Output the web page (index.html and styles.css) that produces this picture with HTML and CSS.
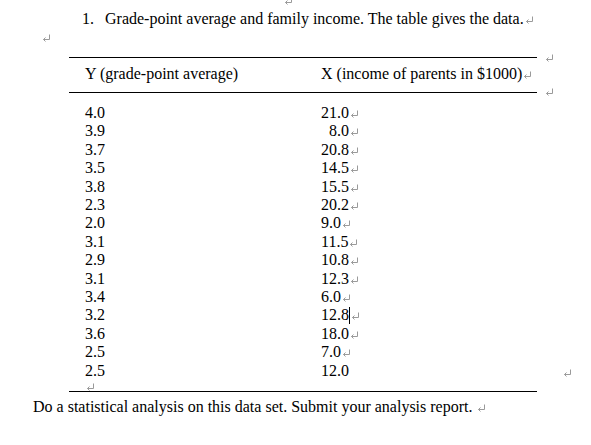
FILE: index.html
```html
<!DOCTYPE html>
<html>
<head>
<meta charset="utf-8">
<link rel="stylesheet" href="styles.css">
</head>
<body>
<svg width="0" height="0" class="defs">
  <symbol id="pm" viewBox="0 0 9 8"><path d="M7.5 0.5 V5.5 H1.5 M3.5 3.5 L1.5 5.5 L3.5 7.5" fill="none" stroke="#9a9a9a" stroke-width="1"/></symbol>
</svg>
<div class="top"><svg class="pm"><use href="#pm"/></svg></div>
<div class="title"><span class="num">1.</span><span>Grade-point average and family income. The table gives the data.<svg class="pm"><use href="#pm"/></svg></span></div>
<div class="empty"><svg class="pm"><use href="#pm"/></svg></div>

<div class="tbl">
  <div class="head">
    <span>Y (grade-point average)</span>
    <span>X (income of parents in $1000)<svg class="pm"><use href="#pm"/></svg></span>
  </div>
  <div class="head-marks"><svg class="pm"><use href="#pm"/></svg><svg class="pm"><use href="#pm"/></svg></div>

  <div class="body">
    <div class="rows">
      <span>4.0</span><span><span class="ra">21.0</span><svg class="pm"><use href="#pm"/></svg></span>
      <span>3.9</span><span><span class="ra">8.0</span><svg class="pm"><use href="#pm"/></svg></span>
      <span>3.7</span><span><span class="ra">20.8</span><svg class="pm"><use href="#pm"/></svg></span>
      <span>3.5</span><span><span class="ra">14.5</span><svg class="pm"><use href="#pm"/></svg></span>
      <span>3.8</span><span><span class="ra">15.5</span><svg class="pm"><use href="#pm"/></svg></span>
      <span>2.3</span><span><span class="ra">20.2</span><svg class="pm"><use href="#pm"/></svg></span>
      <span>2.0</span><span>9.0<svg class="pm"><use href="#pm"/></svg></span>
      <span>3.1</span><span>11.5<svg class="pm"><use href="#pm"/></svg></span>
      <span>2.9</span><span>10.8<svg class="pm"><use href="#pm"/></svg></span>
      <span>3.1</span><span>12.3<svg class="pm"><use href="#pm"/></svg></span>
      <span>3.4</span><span>6.0<svg class="pm"><use href="#pm"/></svg></span>
      <span>3.2</span><span>12.8<span class="caret"></span><svg class="pm"><use href="#pm"/></svg></span>
      <span>3.6</span><span>18.0<svg class="pm"><use href="#pm"/></svg></span>
      <span>2.5</span><span>7.0<svg class="pm"><use href="#pm"/></svg></span>
      <span>2.5</span><span>12.0</span>
    </div>
    <div class="tail"><svg class="pm"><use href="#pm"/></svg></div>
  </div>
  <div class="body-marks"><svg class="pm"><use href="#pm"/></svg></div>
</div>

<p class="task">Do a statistical analysis on this data set. Submit your analysis report. <svg class="pm"><use href="#pm"/></svg></p>
</body>
</html>
```

FILE: styles.css
```css
html, body {
  margin: 0;
  background: #fff;
}
body {
  font-family: "Liberation Serif", "Times New Roman", serif;
  font-size: 16px;
  line-height: 18.4px;
  color: #000;
}
.defs {
  position: absolute;
}
.pm {
  display: inline-block;
  width: 9px;
  height: 8px;
  vertical-align: 0;
  margin-left: 1px;
}
.top {
  height: 6px;
  overflow: hidden;
  padding-left: 283px;
}
.top .pm {
  display: block;
  margin-top: -3px;
}
.title {
  display: flex;
  margin: 4.4px 0 0 82px;
}
.title .num {
  width: 23px;
}
.empty {
  height: 18.4px;
  padding-left: 41px;
  display: flex;
  align-items: center;
}
.tbl {
  margin: 9.8px 0 0 69px;
  display: grid;
  grid-template-columns: 468px auto;
}
.head, .rows {
  display: grid;
  grid-template-columns: 236px 1fr;
  padding-left: 16px;
}
.head {
  border-top: 1px solid #000;
  border-bottom: 1px solid #000;
  padding-top: 7px;
  padding-bottom: 8.6px;
}
.head-marks {
  display: flex;
  flex-direction: column;
  justify-content: space-between;
  padding-left: 7px;
  margin-top: -3px;
  margin-bottom: -3px;
}
.head-marks .pm {
  display: block;
}
.body {
  border-bottom: 1px solid #000;
  padding-top: 11px;
}
.ra {
  display: inline-block;
  width: 28px;
  text-align: right;
}
.caret {
  display: inline-block;
  width: 1px;
  height: 17px;
  background: #000;
  vertical-align: -4px;
}
.tail {
  height: 8px;
  padding-left: 16px;
}
.tail .pm {
  display: block;
  margin-top: 3px;
}
.body-marks {
  align-self: end;
  padding-left: 25px;
  margin-bottom: 15px;
}
.body-marks .pm {
  display: block;
}
.task {
  margin: 6.4px 0 0 33px;
}
```
